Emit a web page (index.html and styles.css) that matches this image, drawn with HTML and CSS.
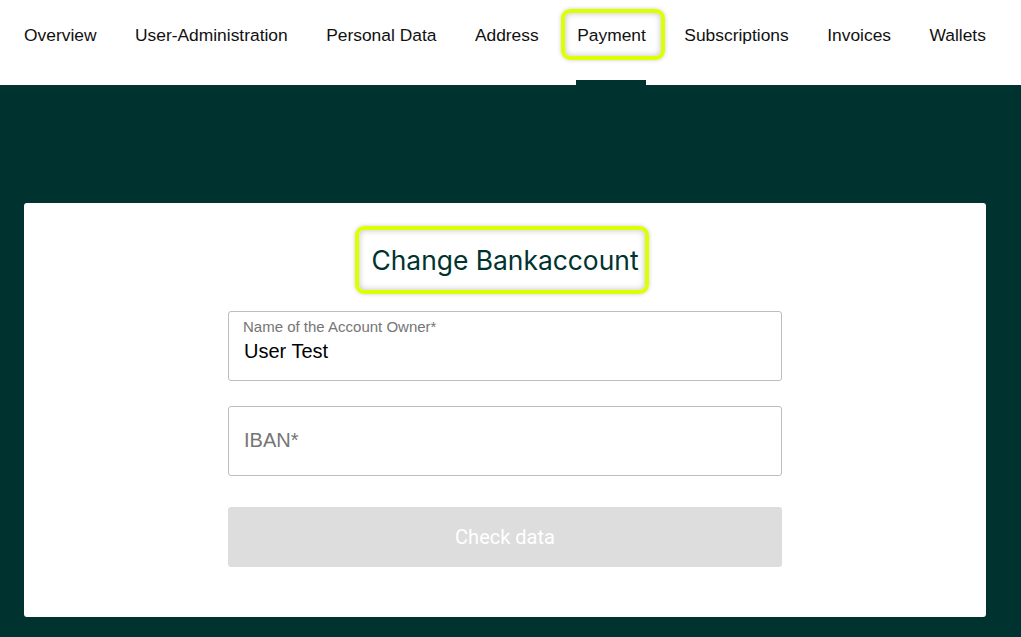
FILE: index.html
```html
<!DOCTYPE html>
<html lang="en">
<head>
    <meta charset="UTF-8">
    <meta name="viewport" content="width=device-width, initial-scale=1.0">
    <title>Payment</title>
    <link rel="stylesheet" href="styles.css">
</head>
<body>
    <nav class="tabs">
        <a class="tab">Overview</a>
        <a class="tab">User-Administration</a>
        <a class="tab">Personal Data</a>
        <a class="tab">Address</a>
        <a class="tab active marked">Payment</a>
        <a class="tab">Subscriptions</a>
        <a class="tab">Invoices</a>
        <a class="tab">Wallets</a>
    </nav>

    <main class="content">
        <section class="card">
            <h1 class="card-title"><span class="marked">Change Bankaccount</span></h1>
            <form class="bank-form">
                <label class="field">
                    <span class="field-label">Name of the Account Owner*</span>
                    <input type="text" class="field-input" value="User Test">
                </label>
                <label class="field">
                    <input type="text" class="field-input only" placeholder="IBAN*">
                </label>
                <button type="button" class="check-btn" disabled>Check data</button>
            </form>
        </section>
    </main>
</body>
</html>
```

FILE: styles.css
```css
html, body {
    margin: 0;
    padding: 0;
}
body {
    background-color: #00332f;
    font-family: "Liberation Sans", Arial, sans-serif;
    height: 637px;
    overflow: hidden;
}
.tabs {
    display: flex;
    gap: 38.5px;
    background-color: #ffffff;
    height: 85px;
    padding-left: 24px;
}
.tab {
    position: relative;
    color: #111111;
    font-size: 17.4px;
    line-height: 70px;
    cursor: pointer;
}
.tab.active::before {
    content: "";
    position: absolute;
    left: -1px;
    right: 0;
    bottom: 0;
    height: 5px;
    background-color: #00332f;
}
.tab.marked::after {
    inset: 9px -19px 25px -16px;
}
.marked {
    position: relative;
}
.marked::after {
    content: "";
    position: absolute;
    border: 4px solid #ddff00;
    border-radius: 9px;
    box-shadow: inset 0 0 6px rgba(0, 0, 0, 0.25), 0 0 4px rgba(0, 0, 0, 0.2);
    pointer-events: none;
}
.content {
    padding: 118px 35px 0 24px;
}
.card {
    background-color: #ffffff;
    border-radius: 3px;
    height: 414px;
    box-sizing: border-box;
    padding-top: 41px;
}
.card-title {
    margin: 0 0 35px;
    text-align: center;
    font-family: Inter, "Liberation Sans", sans-serif;
    font-weight: 400;
    font-size: 26.4px;
    line-height: 32px;
    color: #00332f;
}
.card-title .marked::after {
    inset: -18px -10px -18px -16px;
}
.bank-form {
    width: 554px;
    margin: 0 auto;
    display: flex;
    flex-direction: column;
}
.field {
    display: flex;
    flex-direction: column;
    height: 70px;
    box-sizing: border-box;
    border: 1px solid #bdbdbd;
    border-radius: 3px;
    padding: 7px 15px 0 14px;
    margin-bottom: 25px;
}
.field-label {
    font-size: 15px;
    color: #757575;
    line-height: 16px;
}
.field-input {
    border: none;
    outline: none;
    padding: 0 0 0 1px;
    font-family: "Liberation Sans", Arial, sans-serif;
    font-size: 20px;
    line-height: 24px;
    color: #000000;
    margin-top: 4px;
}
.field-input.only {
    margin-top: 14px;
}
.field-input::placeholder {
    color: #757575;
}
.check-btn {
    margin-top: 6px;
    height: 60px;
    border: none;
    border-radius: 3px;
    background-color: #dddddd;
    color: #ffffff;
    font-family: Roboto, "Liberation Sans", sans-serif;
    font-size: 20px;
}
```
